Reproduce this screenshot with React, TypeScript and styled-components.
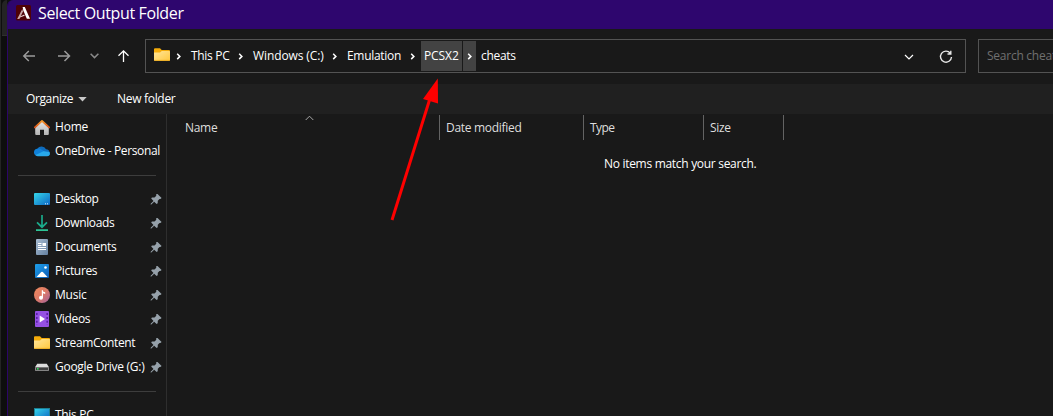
import React from "react";
import styled, { createGlobalStyle } from "styled-components";

const Global = createGlobalStyle`
  * { box-sizing: border-box; }
  html, body { margin: 0; background: #191919; }
  body { font-family: "Open Sans", "Noto Sans", sans-serif; font-size: 12px; color: #fff; overflow: hidden; }
  svg { display: block; flex: none; }
`;

const Screen = styled.div`
  position: relative;
  display: flex;
  width: 1053px;
  height: 416px;
  overflow: hidden;
  background: #101010;
`;
const Backdrop = styled.div`
  flex: none;
  width: 7px;
  background: #0e0e0e;
  border-left: 1px solid #242424;
`;
const BackdropTab = styled.div`
  height: 36px;
  margin-left: 1px;
  background: #242424;
  border-bottom: 1px solid #303030;
  border-top-left-radius: 5px;
`;
const Dialog = styled.div`
  flex: 1;
  min-width: 0;
  display: flex;
  flex-direction: column;
  border-left: 1px solid #2c0568;
  border-top-left-radius: 6px;
  background: #191919;
  overflow: hidden;
`;
const TitleBar = styled.header`
  flex: none;
  height: 29px;
  display: flex;
  align-items: center;
  padding: 0 0 3px 8px;
  gap: 7px;
  background: #2e066e;
`;
const Label = styled.span<{ $ls?: number; $size?: number; $color?: string; $lift?: number }>`
  white-space: nowrap;
  letter-spacing: ${(p) => p.$ls ?? -0.3}px;
  font-size: ${(p) => p.$size ?? 12}px;
  color: ${(p) => p.$color ?? "#fff"};
  line-height: 17px;
  padding-bottom: ${(p) => p.$lift ?? 1}px;
`;
const NavBar = styled.nav`
  flex: none;
  height: 55px;
  display: flex;
  align-items: center;
  padding: 0 0 1px 14px;
`;
const NavButtons = styled.div`
  flex: none;
  display: flex;
  width: 123px;
`;
const NavSlot = styled.span<{ $w: number }>`
  flex: none;
  width: ${(p) => p.$w}px;
`;
const AddressBar = styled.div`
  flex: none;
  width: 821px;
  height: 34px;
  display: flex;
  align-items: center;
  padding-left: 8px;
  border: 1px solid #535353;
`;
const AddressIcon = styled.span`
  padding-bottom: 2px;
`;
const Crumb = styled.span<{ $w: number; $active?: boolean }>`
  flex: none;
  width: ${(p) => p.$w}px;
  height: 30px;
  display: flex;
  align-items: center;
  padding-left: ${(p) => (p.$active ? 3 : 4)}px;
  background: ${(p) => (p.$active ? "#434343" : "transparent")};
`;
const Chevron = styled.span<{ $w: number; $active?: boolean }>`
  flex: none;
  width: ${(p) => p.$w}px;
  height: 30px;
  display: flex;
  align-items: center;
  justify-content: center;
  margin: 0 ${(p) => (p.$active ? 1 : 0)}px;
  background: ${(p) => (p.$active ? "#434343" : "transparent")};
`;
const AddressActions = styled.span`
  margin-left: auto;
  display: flex;
  align-items: center;
  gap: 25px;
  padding: 2px 12px 0 0;
`;
const SearchBox = styled.div`
  flex: none;
  width: 200px;
  height: 34px;
  margin-left: 12px;
  display: flex;
  align-items: center;
  padding-left: 8px;
  border: 1px solid #535353;
`;
const Toolbar = styled.div`
  flex: none;
  height: 30px;
  display: flex;
  align-items: center;
  padding-left: 18px;
  background: #202020;
`;
const OrganizeButton = styled.span`
  display: flex;
  align-items: center;
  justify-content: space-between;
  width: 61px;
  margin-right: 30px;
`;
const Body = styled.div`
  flex: 1;
  display: flex;
  min-height: 0;
`;
const Sidebar = styled.aside`
  flex: none;
  width: 159px;
  border-right: 1px solid #2e2e2e;
  padding-top: 1px;
  overflow: hidden;
`;
const SideRow = styled.div`
  height: 24px;
  display: flex;
  align-items: center;
  padding-left: 26px;
`;
const SideLabel = styled.span`
  flex: none;
  width: 95px;
  margin-left: 5px;
  display: flex;
`;
const Divider = styled.div`
  height: 1px;
  margin: 12px 10px 11px;
  background: #3d3d3d;
`;
const Listing = styled.main`
  flex: 1;
  min-width: 0;
`;
const HeaderRow = styled.div`
  display: flex;
  height: 27px;
  padding: 1px 0 0 11px;
`;
const HeaderCell = styled.div<{ $w: number; $pad: number }>`
  position: relative;
  width: ${(p) => p.$w}px;
  height: 25px;
  display: flex;
  align-items: center;
  padding: 1px 0 0 ${(p) => p.$pad}px;
  border-right: 1px solid #636363;
`;
const SortMark = styled.span`
  position: absolute;
  top: 0;
  left: 127px;
`;
const EmptyMessage = styled.p`
  margin: 0;
  padding: 14px 0 0 437px;
  line-height: 17px;
`;
const Arrow = styled.svg`
  position: absolute;
  left: 380px;
  top: 70px;
`;

const AppLogo = () => (
  <svg width="15" height="16" viewBox="0 0 15 16">
    <rect width="15" height="15.5" rx="1.5" fill="#4f0206" />
    <path d="M6.6 2H8.8L14 13.8H10.8L7.3 5.5Z" fill="#fff" />
    <path d="M6.3 4L7 6.4L4.4 12L3.4 14H1.2Z" fill="#c9a5a5" />
    <path d="M4.1 11.4L8.2 9.6L8.7 10.8L3.8 12.6Z" fill="#e8d2d2" />
  </svg>
);
const FolderIcon = () => (
  <svg width="16" height="16" viewBox="0 0 16 16">
    <defs>
      <linearGradient id="folder" x1="0" y1="0" x2="1" y2="1">
        <stop stopColor="#ffe59b" /><stop offset="1" stopColor="#ffc83d" />
      </linearGradient>
    </defs>
    <path d="M0 2.2Q0 1.2 1 1.2H6L7.7 3H15Q16 3 16 4V9H0Z" fill="#f5ac0a" />
    <path d="M0 5.5H6L7.8 4H15.3Q16 4 16 4.8V13Q16 14 15 14H1Q0 14 0 13Z" fill="url(#folder)" />
    <path d="M.3 13.4H15.7" stroke="#e9a820" strokeWidth=".9" />
  </svg>
);
const HomeIcon = () => (
  <svg width="16" height="16" viewBox="0 0 16 16">
    <defs>
      <linearGradient id="wall" x1="0" y1="0" x2="0" y2="1">
        <stop stopColor="#e6e6e6" /><stop offset="1" stopColor="#b4b4b4" />
      </linearGradient>
      <linearGradient id="roof" x1="0" y1="0" x2="0" y2="1">
        <stop stopColor="#f79a2a" /><stop offset="1" stopColor="#d6501a" />
      </linearGradient>
    </defs>
    <path d="M1.2 8L8 2.3L14.8 8V15Q14.8 16 13.8 16H10V10.8H6V16H2.2Q1.2 16 1.2 15Z" fill="url(#wall)" />
    <path d="M.9 8.4L8 1.9L15.1 8.4" fill="none" stroke="url(#roof)" strokeWidth="1.9" strokeLinecap="round" strokeLinejoin="round" />
  </svg>
);
const CloudIcon = () => (
  <svg width="16" height="16" viewBox="0 0 16 16">
    <path d="M4.2 12.5A4 4 0 0 1 3.3 5.8A5 5 0 0 1 12 6.3A3.3 3.3 0 0 1 15.5 10Z" fill="#0f6cbd" />
    <path d="M3.4 5.8A4.6 4.6 0 0 1 8 7L12.5 9.5L3 12.8A3.5 3.5 0 0 1 0 9.5A3.6 3.6 0 0 1 3.4 5.8Z" fill="#1080d8" />
    <path d="M1.5 12L9.5 8.2L15.4 9Q16.4 10.5 15.6 12Q14.8 13.3 13 13.3H3.8Q2.3 13.2 1.5 12Z" fill="#28a8ea" />
  </svg>
);
const DesktopIcon = () => (
  <svg width="16" height="16" viewBox="0 0 16 16">
    <defs>
      <linearGradient id="desk" x1="0" y1="0" x2="1" y2="1">
        <stop stopColor="#35d6ea" /><stop offset="1" stopColor="#0d66c4" />
      </linearGradient>
    </defs>
    <rect y="2" width="16" height="12" rx="1" fill="url(#desk)" />
    <path d="M11 12.8H12M13 12.8H14" stroke="#d9efff" />
  </svg>
);
const ComputerIcon = () => (
  <svg width="16" height="16" viewBox="0 0 16 16">
    <defs>
      <linearGradient id="pc" x1="0" y1="0" x2="1" y2="1">
        <stop stopColor="#35d6ea" /><stop offset="1" stopColor="#0d66c4" />
      </linearGradient>
    </defs>
    <path d="M6 12H10V14H12V15H4V14H6Z" fill="#8a9aa8" />
    <rect x=".5" y="1.5" width="15" height="11" fill="url(#pc)" stroke="#1d8194" />
  </svg>
);
const DownloadIcon = () => (
  <svg width="16" height="16" viewBox="0 0 16 16" fill="none" stroke="#1bab8b" strokeWidth="1.7">
    <path d="M8 0V12M3 7.3L8 12.2L13 7.3" />
    <path d="M2 15.1H14" stroke="#2dc496" />
  </svg>
);
const DocumentIcon = () => (
  <svg width="16" height="16" viewBox="0 0 16 16">
    <defs>
      <linearGradient id="doc" x1="0" y1="0" x2="1" y2="1">
        <stop stopColor="#a9bdd3" /><stop offset="1" stopColor="#64809f" />
      </linearGradient>
    </defs>
    <rect x="2" y="0" width="12" height="16" rx="1" fill="url(#doc)" />
    <path d="M4 4.5H7.5M4 6.5H7.5M4 8.5H12M4 10.5H12" stroke="#fff" />
    <rect x="8.5" y="4" width="3.5" height="3" fill="#fff" />
  </svg>
);
const PictureIcon = () => (
  <svg width="16" height="16" viewBox="0 0 16 16">
    <defs>
      <linearGradient id="pic" x1="0" y1="0" x2="1" y2="1">
        <stop stopColor="#1ea0ea" /><stop offset="1" stopColor="#0c5cb8" />
      </linearGradient>
    </defs>
    <rect x="1" y="1" width="14" height="14" rx="1" fill="url(#pic)" />
    <path d="M2.5 14L7.2 9Q8 8.3 8.8 9L13.5 14Z" fill="#fff" />
    <circle cx="11.5" cy="4.5" r="1.3" fill="#fff" />
  </svg>
);
const MusicIcon = () => (
  <svg width="16" height="16" viewBox="0 0 16 16">
    <defs>
      <linearGradient id="mus" x1="0" y1="0" x2="1" y2="1">
        <stop stopColor="#f08a5c" /><stop offset=".5" stopColor="#dd7a68" /><stop offset="1" stopColor="#a05fa0" />
      </linearGradient>
    </defs>
    <circle cx="8" cy="8" r="8" fill="url(#mus)" />
    <circle cx="7" cy="10.8" r="2" fill="#fff" />
    <path d="M7.8 3.3H9V4.5L11.2 5.2V7L9 6.3V11H7.8Z" fill="#fff" />
  </svg>
);
const VideoIcon = () => (
  <svg width="16" height="16" viewBox="0 0 16 16">
    <rect x="1" y="0" width="14" height="16" rx="1" fill="#9550e4" />
    <path d="M2.8 2V14M13.2 2V14" stroke="#5a1fa8" strokeWidth="1.6" strokeDasharray="2 1.9" />
    <path d="M5.7 4.5L11 8L5.7 11.5Z" fill="#fff" />
  </svg>
);
const DriveIcon = () => (
  <svg width="16" height="16" viewBox="0 0 16 16">
    <path d="M3.2 4.8H12.8L15 8.2H1Z" fill="#dcdcdc" />
    <rect x="1" y="8" width="14" height="4" rx=".8" fill="#8d8d8d" />
    <rect x="2" y="8.7" width="12" height="2.4" fill="#3f3f3f" />
    <rect x="3" y="9" width="1.6" height="1.6" fill="#2fe05a" />
  </svg>
);
const PinIcon = () => (
  <svg width="12" height="11" viewBox="-.6 .4 12 11">
    <path d="M6.5 0L11 4.5L9.8 5.5L8.9 5.3L7.2 7.2L7.1 9.7L6 10.3L3.6 8.1L.7 10.9L0 10.9L.1 10.2L2.9 7.3L.6 5L1.3 3.9L3.9 3.8L5.7 2.1L5.5 1Z" fill="#96a1aa" />
  </svg>
);
const CrumbArrow = () => (
  <svg width="6" height="8" viewBox="0 0 6 8">
    <path d="M1.2 1.7L3.9 4.4L1.2 7.1" fill="none" stroke="#fff" strokeWidth="1.5" />
  </svg>
);

const places = [
  { name: "Desktop", Icon: DesktopIcon, ls: -0.4 },
  { name: "Downloads", Icon: DownloadIcon, ls: -0.35 },
  { name: "Documents", Icon: DocumentIcon, ls: -0.33 },
  { name: "Pictures", Icon: PictureIcon, ls: -0.35 },
  { name: "Music", Icon: MusicIcon, ls: -0.2 },
  { name: "Videos", Icon: VideoIcon, ls: -0.33 },
  { name: "StreamContent", Icon: FolderIcon, ls: -0.38 },
  { name: "Google Drive (G:)", Icon: DriveIcon, ls: -0.27 },
];

const SideItem = ({ name, Icon, ls, pinned }: { name: string; Icon: React.FC; ls: number; pinned?: boolean }) => (
  <SideRow>
    <Icon />
    <SideLabel><Label $ls={ls}>{name}</Label></SideLabel>
    {pinned && <PinIcon />}
  </SideRow>
);

export default function App() {
  return (
    <Screen>
      <Global />
      <Backdrop><BackdropTab /></Backdrop>
      <Dialog>
        <TitleBar>
          <AppLogo />
          <Label $size={16} $ls={-0.37} $lift={0}>Select Output Folder</Label>
        </TitleBar>
        <NavBar>
          <NavButtons>
            <NavSlot $w={36}>
              <svg width="14" height="14" viewBox="0 0 14 14" fill="none" stroke="#9a9a9a" strokeWidth="1.5"><path d="M13 7H2M6.8 2L1.8 7L6.8 12" /></svg>
            </NavSlot>
            <NavSlot $w={32}>
              <svg width="14" height="14" viewBox="0 0 14 14" fill="none" stroke="#9a9a9a" strokeWidth="1.5"><path d="M0 7H11.2M6.5 2L11.5 7L6.5 12" /></svg>
            </NavSlot>
            <NavSlot $w={27}>
              <svg width="10" height="14" viewBox="0 0 10 14" fill="none" stroke="#8a8a8a" strokeWidth="1.5"><path d="M.6 4.7L4.5 8.6L8.4 4.7" /></svg>
            </NavSlot>
            <NavSlot $w={14}>
              <svg width="14" height="14" viewBox="0 0 14 14" fill="none" stroke="#fff" strokeWidth="1.3"><path d="M6.5 13V1.9M1.5 6.8L6.5 1.8L11.5 6.8" /></svg>
            </NavSlot>
          </NavButtons>
          <AddressBar>
            <AddressIcon><FolderIcon /></AddressIcon>
            <Chevron $w={17}><CrumbArrow /></Chevron>
            <Crumb $w={46}><Label>This PC</Label></Crumb>
            <Chevron $w={16}><CrumbArrow /></Chevron>
            <Crumb $w={78}><Label $ls={-0.1}>Windows (C:)</Label></Crumb>
            <Chevron $w={16}><CrumbArrow /></Chevron>
            <Crumb $w={62}><Label>Emulation</Label></Crumb>
            <Chevron $w={16}><CrumbArrow /></Chevron>
            <Crumb $w={41} $active><Label $ls={-0.1}>PCSX2</Label></Crumb>
            <Chevron $w={13} $active><CrumbArrow /></Chevron>
            <Crumb $w={60}><Label>cheats</Label></Crumb>
            <AddressActions>
              <svg width="10" height="8" viewBox="0 0 10 8" fill="none" stroke="#fff" strokeWidth="1.2"><path d="M1 2L5 6L9 2" /></svg>
              <svg width="14" height="14" viewBox="0 0 14 14" fill="none" stroke="#e8e8e8" strokeWidth="1.4"><path d="M11.3 3.2A5.5 5.5 0 1 0 12.5 7M11.8 .8V4H8.5" /></svg>
            </AddressActions>
          </AddressBar>
          <SearchBox><Label $ls={-0.25} $color="#707070">Search cheats</Label></SearchBox>
        </NavBar>
        <Toolbar>
          <OrganizeButton>
            <Label $ls={-0.38}>Organize</Label>
            <svg width="9" height="5" viewBox="0 0 9 5"><path d="M.3 0H8.7L4.5 4.6Z" fill="#c8c8c8" /></svg>
          </OrganizeButton>
          <Label>New folder</Label>
        </Toolbar>
        <Body>
          <Sidebar>
            <SideItem name="Home" Icon={HomeIcon} ls={-0.2} />
            <SideItem name="OneDrive - Personal" Icon={CloudIcon} ls={-0.36} />
            <Divider />
            {places.map((p) => <SideItem key={p.name} {...p} pinned />)}
            <Divider />
            <SideItem name="This PC" Icon={ComputerIcon} ls={-0.3} />
          </Sidebar>
          <Listing>
            <HeaderRow>
              <HeaderCell $w={262} $pad={7}>
                <Label $color="#dedede">Name</Label>
                <SortMark><svg width="9" height="6" viewBox="0 0 9 6" fill="none" stroke="#a8a8a8"><path d="M.7 5L4.5 1.2L8.3 5" /></svg></SortMark>
              </HeaderCell>
              <HeaderCell $w={144} $pad={6}><Label $color="#dedede">Date modified</Label></HeaderCell>
              <HeaderCell $w={120} $pad={6}><Label $ls={-0.6} $color="#dedede">Type</Label></HeaderCell>
              <HeaderCell $w={80} $pad={6}><Label $color="#dedede">Size</Label></HeaderCell>
            </HeaderRow>
            <EmptyMessage><Label>No items match your search.</Label></EmptyMessage>
          </Listing>
        </Body>
      </Dialog>
      <Arrow width="70" height="155" viewBox="0 0 70 155">
        <path d="M12 150L52 22" stroke="#f00" strokeWidth="3" />
        <path d="M57.8 8.5L43 29L58 33.5Z" fill="#f00" />
      </Arrow>
    </Screen>
  );
}
